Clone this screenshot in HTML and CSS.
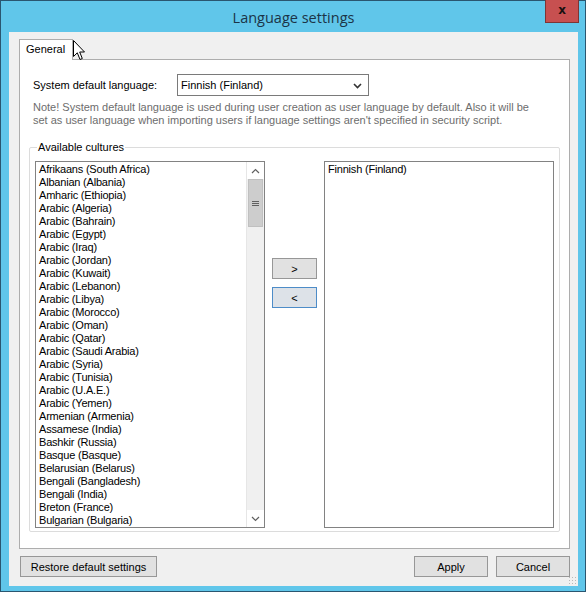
FILE: index.html
```html
<!DOCTYPE html>
<html>
<head>
<meta charset="utf-8">
<title>Language settings</title>
<link rel="stylesheet" href="styles.css">
</head>
<body>
<div class="window">
  <div class="titlebar">
    <span class="title">Language settings</span>
    <div class="close">x</div>
  </div>
  <div class="client">
    <div class="tabs">
      <div class="tab">General</div>
    </div>
    <div class="panel">
      <div class="row">
        <span class="label">System default language:</span>
        <div class="combo">
          <span>Finnish (Finland)</span>
          <svg class="chev" width="9" height="6" viewBox="0 0 9 6"><path d="M1 1 L4.5 4.5 L8 1" fill="none" stroke="#333" stroke-width="1.6"/></svg>
        </div>
      </div>
      <p class="note">Note! System default language is used during user creation as user language by default. Also it will be set as user language when importing users if language settings aren't specified in security script.</p>
      <fieldset class="group">
        <legend>Available cultures</legend>
        <div class="group-body">
          <div class="listbox left">
            <ul class="items">
              <li>Afrikaans (South Africa)</li>
              <li>Albanian (Albania)</li>
              <li>Amharic (Ethiopia)</li>
              <li>Arabic (Algeria)</li>
              <li>Arabic (Bahrain)</li>
              <li>Arabic (Egypt)</li>
              <li>Arabic (Iraq)</li>
              <li>Arabic (Jordan)</li>
              <li>Arabic (Kuwait)</li>
              <li>Arabic (Lebanon)</li>
              <li>Arabic (Libya)</li>
              <li>Arabic (Morocco)</li>
              <li>Arabic (Oman)</li>
              <li>Arabic (Qatar)</li>
              <li>Arabic (Saudi Arabia)</li>
              <li>Arabic (Syria)</li>
              <li>Arabic (Tunisia)</li>
              <li>Arabic (U.A.E.)</li>
              <li>Arabic (Yemen)</li>
              <li>Armenian (Armenia)</li>
              <li>Assamese (India)</li>
              <li>Bashkir (Russia)</li>
              <li>Basque (Basque)</li>
              <li>Belarusian (Belarus)</li>
              <li>Bengali (Bangladesh)</li>
              <li>Bengali (India)</li>
              <li>Breton (France)</li>
              <li>Bulgarian (Bulgaria)</li>
            </ul>
            <div class="vscroll">
              <div class="sbtn"><svg width="9" height="6" viewBox="0 0 9 6"><path d="M1 5 L4.5 1.5 L8 5" fill="none" stroke="#606060" stroke-width="1.2"/></svg></div>
              <div class="thumb"><span></span><span></span><span></span></div>
              <div class="track"></div>
              <div class="sbtn"><svg width="9" height="6" viewBox="0 0 9 6"><path d="M1 1 L4.5 4.5 L8 1" fill="none" stroke="#606060" stroke-width="1.2"/></svg></div>
            </div>
          </div>
          <div class="movers">
            <button class="btn small">&gt;</button>
            <button class="btn small focus">&lt;</button>
          </div>
          <div class="listbox right">
            <ul class="items">
              <li>Finnish (Finland)</li>
            </ul>
          </div>
        </div>
      </fieldset>
    </div>
    <div class="footer">
      <button class="btn restore">Restore default settings</button>
      <div class="spacer"></div>
      <button class="btn action">Apply</button>
      <button class="btn action">Cancel</button>
    </div>
    <div class="grip"></div>
  </div>
</div>
<svg class="cursor" width="13" height="21" viewBox="0 0 13 21"><path d="M0.5 0.5 L0.5 16.5 L4.3 12.8 L7 19.5 L9.3 18.5 L6.7 12 L11.5 12 Z" fill="#fff" stroke="#000" stroke-width="1"/></svg>
</body>
</html>
```

FILE: styles.css
```css
* { box-sizing: border-box; }
html, body { margin: 0; padding: 0; }
body {
  background: #ffffff;
  width: 587px;
  height: 595px;
  position: relative;
  overflow: hidden;
  font-family: "Liberation Sans", Arial, sans-serif;
  font-size: 11px;
  color: #000;
}
.window {
  width: 586px;
  height: 592px;
  border: 1px solid #2a5670;
  background: #60c6ea;
  display: flex;
  flex-direction: column;
  padding: 0 7px 5px 8px;
}
.titlebar {
  height: 31px;
  flex: none;
  position: relative;
  display: flex;
  align-items: center;
  justify-content: center;
}
.title {
  font-family: "Open Sans", "Noto Sans", sans-serif;
  font-size: 14.5px;
  color: #1b3447;
  margin-left: 0;
  margin-top: 1px;
}
.close {
  position: absolute;
  right: -1px;
  top: -1px;
  width: 34px;
  height: 23px;
  background: #c75050;
  border: 1px solid #7d3535;
  border-top: none;
  color: #1a1010;
  font-family: "DejaVu Sans", sans-serif;
  font-weight: bold;
  font-size: 12px;
  display: flex;
  align-items: center;
  justify-content: center;
  padding-bottom: 3px;
}
.client {
  flex: 1;
  background: #f0f0f0;
  padding: 7px 8px 0 10px;
  display: flex;
  flex-direction: column;
  position: relative;
}
.tabs {
  display: flex;
  height: 20px;
  position: relative;
  z-index: 1;
}
.tab {
  width: 54px;
  height: 21px;
  background: #fff;
  border: 1px solid #adadad;
  border-bottom: none;
  padding: 3px 0 0 6px;
}
.panel {
  width: 551px;
  height: 490px;
  background: #fff;
  border: 1px solid #adadad;
  padding: 14px 9px 0 9px;
}
.row {
  display: flex;
  align-items: center;
  padding-left: 4px;
}
.label { width: 144px; }
.combo {
  width: 192px;
  height: 22px;
  border: 1px solid #7a7a7a;
  display: flex;
  align-items: center;
  justify-content: space-between;
  padding: 0 6px 0 3px;
}
.chev { margin-top: 1px; }
.note {
  margin: 5px 0 0 4px;
  color: #6d6d6d;
  line-height: 13px;
  width: 510px;
}
.group {
  margin: 14px 0 0 0;
  border: 1px solid #dcdcdc;
  border-radius: 2px;
  padding: 0 5px 0 5px;
  width: 531px;
  height: 391px;
}
.group legend {
  padding: 0 1px;
  margin-left: 2px;
  line-height: 13px;
}
.group-body {
  display: flex;
  margin-top: 7px;
}
.listbox {
  width: 230px;
  height: 367px;
  border: 1px solid #828282;
  background: #fff;
  display: flex;
}
.items {
  list-style: none;
  margin: 0;
  padding: 1px 0 0 3px;
  flex: 1;
  line-height: 13px;
  white-space: nowrap;
  overflow: hidden;
  letter-spacing: -0.2px;
}
.vscroll {
  width: 18px;
  display: flex;
  flex-direction: column;
  background: #f0f0f0;
  border-left: 1px solid #e6e6e6;
}
.sbtn {
  height: 17px;
  background: #fff;
  display: flex;
  align-items: center;
  justify-content: center;
  flex: none;
}
.thumb {
  height: 48px;
  margin: 0 1px;
  background: #cdcdcd;
  border: 1px solid #c0c0c0;
  display: flex;
  flex-direction: column;
  align-items: center;
  justify-content: center;
  gap: 1px;
}
.thumb span {
  width: 7px;
  height: 1px;
  background: #606060;
}
.track { flex: 1; background: #f0f0f0; }
.movers {
  width: 59px;
  display: flex;
  flex-direction: column;
  align-items: center;
  padding-top: 97px;
  gap: 8px;
}
.btn {
  font-family: "Liberation Sans", Arial, sans-serif;
  font-size: 11px;
  color: #000;
  background: #e1e1e1;
  border: 1px solid #979797;
  padding: 0;
  margin: 0;
  height: 21px;
}
.btn.small { width: 45px; height: 21px; }
.btn.focus { border-color: #4d8cc8; background: #dde2e8; }
.footer {
  display: flex;
  margin-top: 7px;
  padding-left: 1px;
}
.restore { width: 137px; }
.spacer { flex: 1; }
.action { width: 74px; margin-left: 8px; }
.grip {
  position: absolute;
  right: 2px;
  bottom: 2px;
  width: 8px;
  height: 8px;
  background-image: radial-gradient(circle, #b8b8b8 0.8px, transparent 1px);
  background-size: 3px 3px;
}
.cursor {
  position: absolute;
  left: 73px;
  top: 40px;
}
```
